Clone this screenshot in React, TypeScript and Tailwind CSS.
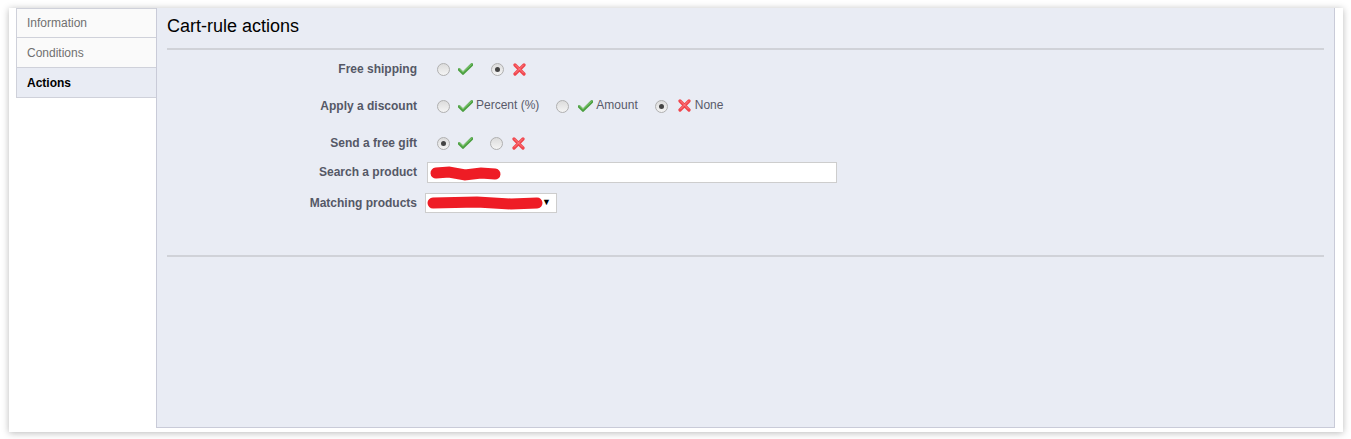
const labelCls =
    "w-[270px] text-right font-bold text-[12px] text-[#555866] pr-[10px]";

const Radio = ({ checked }: { checked?: boolean }) => (
    <span className="w-[13px] h-[13px] rounded-full border border-[#b0b0b0] bg-gradient-to-b from-[#dcdcdc] to-[#f4f4f4] flex items-center justify-center shrink-0">
        {checked && <span className="w-[5px] h-[5px] rounded-full bg-[#444]"></span>}
    </span>
);

const CheckIcon = () => (
    <svg width="15" height="12" viewBox="0 0 15 12" className="shrink-0">
        <path
            d="M1.2 6.5 L5 10.3 L13.8 1.6"
            fill="none"
            stroke="#4b9f40"
            strokeWidth="3"
            strokeLinecap="round"
            strokeLinejoin="round"
        />
        <path
            d="M1.6 6 L5 9.2 L13.4 1.3"
            fill="none"
            stroke="#95d784"
            strokeWidth="0.9"
            strokeLinecap="round"
        />
    </svg>
);

const CrossIcon = () => (
    <svg width="13" height="13" viewBox="0 0 13 13" className="shrink-0">
        <path
            d="M2 2 L11 11 M11 2 L2 11"
            fill="none"
            stroke="#f0444b"
            strokeWidth="3.2"
            strokeLinecap="round"
        />
        <path
            d="M2.5 2 L10.5 10 M10.5 2 L2.5 10"
            fill="none"
            stroke="#ff8f94"
            strokeWidth="0.8"
            strokeLinecap="round"
        />
    </svg>
);

function App() {
    return (
        <div className="w-[1351px] h-[439px] bg-white pt-[8px] pl-[9px] font-['Liberation_Sans',Arial,sans-serif]">
            <div className="w-[1334px] h-[424px] bg-white shadow-[0_1px_7px_rgba(0,0,0,0.28)] flex">
                <div className="w-[148px] pl-[7px] shrink-0">
                    <ul className="text-[12px]">
                        <li className="h-[30px] border border-[#cfd1da] border-r-0 bg-[#fafafa] pl-[10px] flex items-center text-[#707070]">
                            Information
                        </li>
                        <li className="h-[30px] border border-t-0 border-[#cfd1da] border-r-0 bg-[#fafafa] pl-[10px] flex items-center text-[#707070]">
                            Conditions
                        </li>
                        <li className="h-[30px] border border-t-0 border-[#cfd1da] border-r-0 bg-[#e9ecf4] pl-[10px] flex items-center font-bold text-black w-[142px]">
                            Actions
                        </li>
                    </ul>
                </div>
                <div className="w-[1179px] h-[420px] -ml-[1px] bg-[#e9ecf4] border border-t-0 border-[#c9cbd8] px-[10px]">
                    <h2 className="text-[18px] text-black pt-[5px] h-[40px]">
                        Cart-rule actions
                    </h2>
                    <div className="border-t-2 border-[#d0d2d8]"></div>
                    <div className="flex flex-col -ml-[10px]">
                        <div className="flex items-center h-[26px] mt-[6px]">
                            <label className={labelCls}>Free shipping</label>
                            <div className="flex items-center pl-[10px]">
                                <Radio />
                                <span className="ml-[8px]"><CheckIcon /></span>
                                <span className="ml-[18px]"><Radio checked /></span>
                                <span className="ml-[9px]"><CrossIcon /></span>
                            </div>
                        </div>
                        <div className="flex items-center h-[26px] mt-[11px]">
                            <label className={labelCls}>Apply a discount</label>
                            <div className="flex items-center pl-[10px] text-[12px] text-[#585a69] -mt-[3px]">
                                <span className="mt-[3px]"><Radio /></span>
                                <span className="ml-[8px] mt-[2px]"><CheckIcon /></span>
                                <span className="ml-[3px]">Percent (%)</span>
                                <span className="ml-[17px] mt-[3px]"><Radio /></span>
                                <span className="ml-[9px] mt-[2px]"><CheckIcon /></span>
                                <span className="ml-[3px]">Amount</span>
                                <span className="ml-[17px] mt-[3px]"><Radio checked /></span>
                                <span className="ml-[10px] mt-[2px]"><CrossIcon /></span>
                                <span className="ml-[4px]">None</span>
                            </div>
                        </div>
                        <div className="flex items-center h-[26px] mt-[11px]">
                            <label className={labelCls}>Send a free gift</label>
                            <div className="flex items-center pl-[10px]">
                                <span className="mt-[1px]"><Radio checked /></span>
                                <span className="ml-[8px]"><CheckIcon /></span>
                                <span className="ml-[17px]"><Radio /></span>
                                <span className="ml-[9px]"><CrossIcon /></span>
                            </div>
                        </div>
                        <div className="flex items-center h-[22px] mt-[5px]">
                            <label className={labelCls}>Search a product</label>
                            <div className="w-[410px] h-[21px] bg-white border border-[#cdcdcd] relative">
                                <svg width="80" height="16" className="absolute left-[1px] top-[2px]">
                                    <path d="M7 8 L20 7 L36 10 L52 8 L66 9" stroke="#ee1c25" strokeWidth="11" strokeLinecap="round" fill="none" />
                                </svg>
                            </div>
                        </div>
                        <div className="flex items-center h-[22px] mt-[9px]">
                            <label className={`${labelCls} -mr-[2px]`}>Matching products</label>
                            <div className="w-[132px] h-[20px] bg-white border border-[#cdcdcd] relative flex items-center justify-end pr-[5px]">
                                <svg width="122" height="16" className="absolute left-[1px] top-[1px]">
                                    <path d="M6 8 L50 7 L84 9 L110 8" stroke="#ee1c25" strokeWidth="11" strokeLinecap="round" fill="none" />
                                </svg>
                                <span className="text-[9px] text-black">▼</span>
                            </div>
                        </div>
                    </div>
                    <div className="border-t-2 border-[#d0d2d8] mt-[41px]"></div>
                </div>
            </div>
        </div>
    );
}

export default App;
